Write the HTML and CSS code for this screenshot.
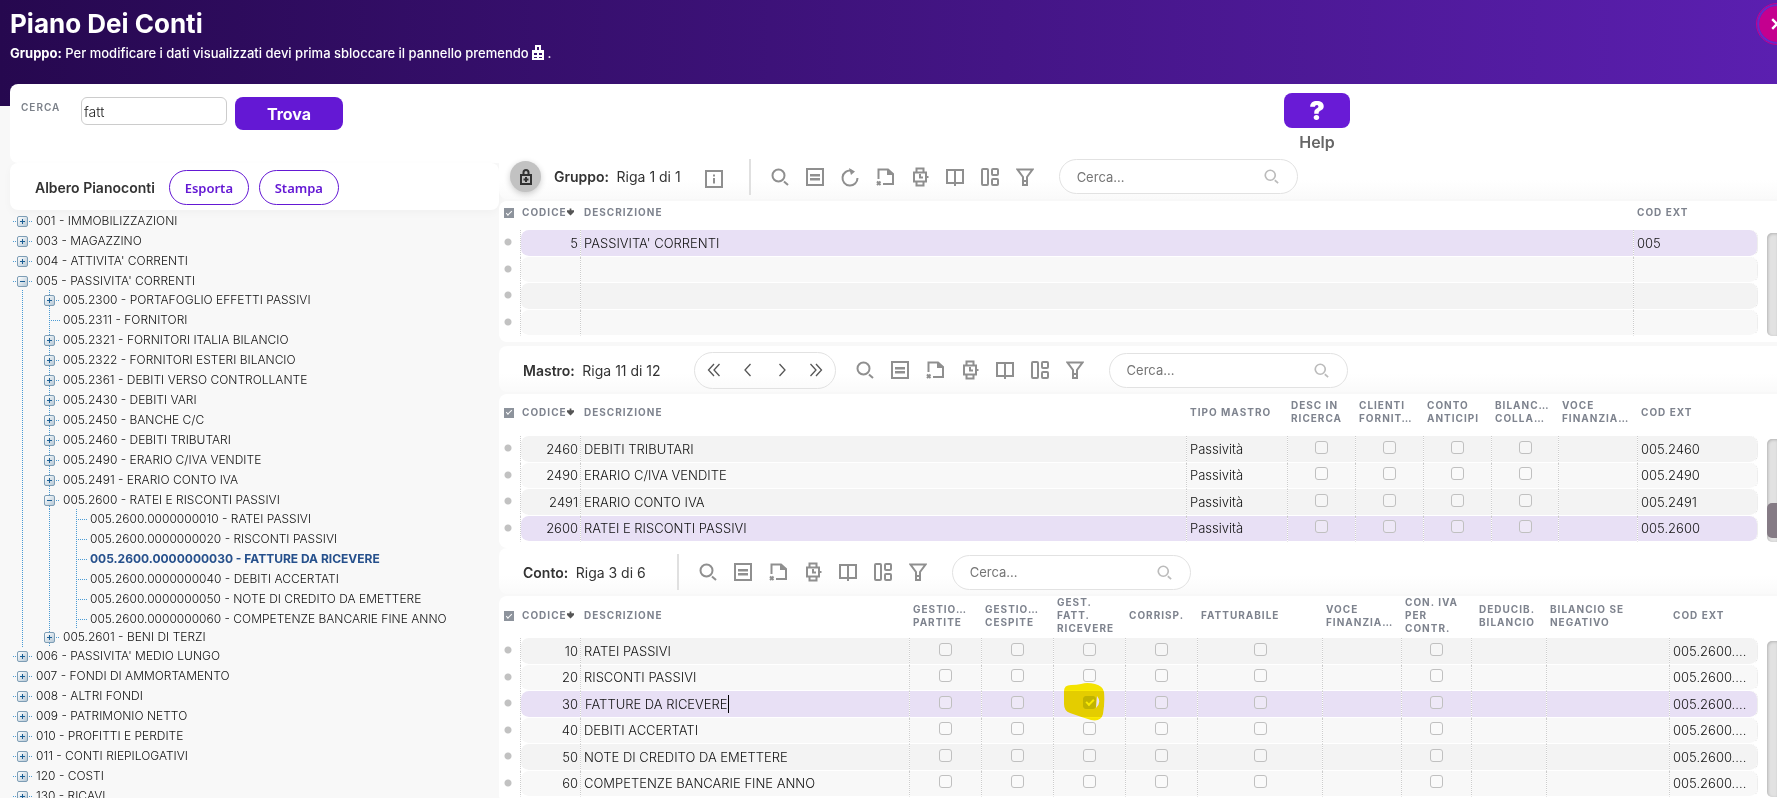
FILE: index.html
```html
<!DOCTYPE html>
<html lang="it">
<head>
<meta charset="utf-8">
<title>Piano Dei Conti</title>
<link rel="stylesheet" href="styles.css">
</head>
<body>
<svg class="sprite" aria-hidden="true">
  <symbol id="i-search" viewBox="0 0 18 18"><circle cx="7.5" cy="7.5" r="6"/><path d="M13 13.5l4 3.5"/></symbol>
  <symbol id="i-list" viewBox="0 0 18 18"><path d="M1 1h16v16H1z"/><path class="solid" d="M4 6h10v2.500H4zM4 10h10v2.500H4z"/></symbol>
  <symbol id="i-refresh" viewBox="0 0 18 18"><path d="M16.5 10a7.5 7.5 0 1 1-6-7.3"/><path class="solid" d="M8 0l6 3.5L10 7z"/></symbol>
  <symbol id="i-export" viewBox="0 0 18 18"><path d="M2.500 11V1.500H12L17 6v10H7"/><path class="solid" d="M11 1l6.500 6H11z"/><path d="M1 13.500l3.500 3.500M4.500 13.500L1 17"/></symbol>
  <symbol id="i-watch" viewBox="0 0 18 20"><path d="M5.500 5V1.500h7V5M5.500 15v3.500h7V15M3 5.500h12v9H3zM15 10h2.500M9 7v3.500h3" /></symbol>
  <symbol id="i-book" viewBox="0 0 18 18"><path d="M1 2h16v13H1zM9 2v16"/></symbol>
  <symbol id="i-grid" viewBox="0 0 18 18"><rect x="1" y="1" width="6" height="16" rx="1"/><rect x="11" y="1" width="6" height="6" rx="1"/><rect x="11" y="11" width="6" height="6" rx="1"/></symbol>
  <symbol id="i-filter" viewBox="0 0 18 18"><path d="M1.500 1.500h15L11 9v8H7V9zM7 13h4"/></symbol>
  <symbol id="i-info" viewBox="0 0 18 18"><path d="M1 1h16v16H1zM9 4.500v2M9 8v5.500"/></symbol>
  <symbol id="i-lock" viewBox="0 0 12 16"><path d="M1 6h10v9H1zM3.500 6V3.500a2.500 2.500 0 0 1 5 0V6M6 8v5M3.500 10.500h5"/></symbol>
  <symbol id="i-first" viewBox="0 0 14 14"><path d="M7 1L1.500 7 7 13M12.500 1L7 7l5.500 6"/></symbol>
  <symbol id="i-prev" viewBox="0 0 14 14"><path d="M9.500 1L4 7l5.500 6"/></symbol>
  <symbol id="i-next" viewBox="0 0 14 14"><path d="M4.500 1L10 7l-5.500 6"/></symbol>
  <symbol id="i-last" viewBox="0 0 14 14"><path d="M1.500 1L7 7l-5.500 6M7 1l5.500 6L7 13"/></symbol>
  <symbol id="i-sort" viewBox="0 0 8 8"><path class="solid" d="M3 0h2v2h3v2L4 8 0 4V2h3z"/></symbol>
</svg>

<div class="app">
  <header class="banner">
    <h1>Piano Dei Conti</h1>
    <p><strong>Gruppo:</strong> Per modificare i dati visualizzati devi prima sbloccare il pannello premendo
      <svg class="lock-inline" viewBox="0 0 12 16"><path d="M3 6V1h6v5h3v10H0V6zM5 3v3h2V3zM2 9v2h3V9zM7 9v2h3V9zM2 13v1h3v-1zM7 13v1h3v-1z"/></svg> .</p>
    <button class="close" aria-label="Chiudi"><svg viewBox="0 0 10 10"><path d="M1 1l8 8M9 1L1 9"/></svg></button>
  </header>

  <form class="finder">
    <label for="cerca">CERCA</label>
    <input id="cerca" type="text" value="fatt">
    <button type="button" class="primary">Trova</button>
    <div class="help">
      <button type="button" id="help" aria-labelledby="help-text">?</button>
      <label id="help-text" for="help">Help</label>
    </div>
  </form>

  <main>
    <aside>
      <div class="tree-bar"><h2>Albero Pianoconti</h2><button>Esporta</button><button>Stampa</button></div>
      <ul class="tree">
        <li><button class="tg plus" aria-label="Espandi"></button>001 - IMMOBILIZZAZIONI</li>
        <li><button class="tg plus" aria-label="Espandi"></button>003 - MAGAZZINO</li>
        <li><button class="tg plus" aria-label="Espandi"></button>004 - ATTIVITA' CORRENTI</li>
        <li><button class="tg" aria-label="Comprimi"></button>005 - PASSIVITA' CORRENTI</li>
        <li class="branch"><ul>
          <li><button class="tg plus" aria-label="Espandi"></button>005.2300 - PORTAFOGLIO EFFETTI PASSIVI</li>
          <li class="leaf">005.2311 - FORNITORI</li>
          <li><button class="tg plus" aria-label="Espandi"></button>005.2321 - FORNITORI ITALIA BILANCIO</li>
          <li><button class="tg plus" aria-label="Espandi"></button>005.2322 - FORNITORI ESTERI BILANCIO</li>
          <li><button class="tg plus" aria-label="Espandi"></button>005.2361 - DEBITI VERSO CONTROLLANTE</li>
          <li><button class="tg plus" aria-label="Espandi"></button>005.2430 - DEBITI VARI</li>
          <li><button class="tg plus" aria-label="Espandi"></button>005.2450 - BANCHE C/C</li>
          <li><button class="tg plus" aria-label="Espandi"></button>005.2460 - DEBITI TRIBUTARI</li>
          <li><button class="tg plus" aria-label="Espandi"></button>005.2490 - ERARIO C/IVA VENDITE</li>
          <li><button class="tg plus" aria-label="Espandi"></button>005.2491 - ERARIO CONTO IVA</li>
          <li><button class="tg" aria-label="Comprimi"></button>005.2600 - RATEI E RISCONTI PASSIVI</li>
          <li class="branch"><ul>
            <li class="leaf">005.2600.0000000010 - RATEI PASSIVI</li>
            <li class="leaf">005.2600.0000000020 - RISCONTI PASSIVI</li>
            <li class="leaf current">005.2600.0000000030 - FATTURE DA RICEVERE</li>
            <li class="leaf">005.2600.0000000040 - DEBITI ACCERTATI</li>
            <li class="leaf">005.2600.0000000050 - NOTE DI CREDITO DA EMETTERE</li>
            <li class="leaf">005.2600.0000000060 - COMPETENZE BANCARIE FINE ANNO</li>
          </ul></li>
          <li><button class="tg plus" aria-label="Espandi"></button>005.2601 - BENI DI TERZI</li>
        </ul></li>
        <li><button class="tg plus" aria-label="Espandi"></button>006 - PASSIVITA' MEDIO LUNGO</li>
        <li><button class="tg plus" aria-label="Espandi"></button>007 - FONDI DI AMMORTAMENTO</li>
        <li><button class="tg plus" aria-label="Espandi"></button>008 - ALTRI FONDI</li>
        <li><button class="tg plus" aria-label="Espandi"></button>009 - PATRIMONIO NETTO</li>
        <li><button class="tg plus" aria-label="Espandi"></button>010 - PROFITTI E PERDITE</li>
        <li><button class="tg plus" aria-label="Espandi"></button>011 - CONTI RIEPILOGATIVI</li>
        <li><button class="tg plus" aria-label="Espandi"></button>120 - COSTI</li>
        <li><button class="tg plus" aria-label="Espandi"></button>130 - RICAVI</li>
      </ul>
    </aside>

    <div class="panels">
      <section>
        <div class="bar">
          <button class="lock" aria-label="Sblocca"><svg><use href="#i-lock"/></svg></button>
          <h2>Gruppo: <span>Riga 1 di 1</span></h2>
          <button class="icon info" aria-label="Info"><svg><use href="#i-info"/></svg></button>
          <i class="sep"></i>
          <div class="tools">
            <button class="icon" aria-label="Cerca"><svg><use href="#i-search"/></svg></button>
            <button class="icon" aria-label="Dettaglio"><svg><use href="#i-list"/></svg></button>
            <button class="icon" aria-label="Aggiorna"><svg><use href="#i-refresh"/></svg></button>
            <button class="icon" aria-label="Esporta"><svg><use href="#i-export"/></svg></button>
            <button class="icon" aria-label="Storico"><svg><use href="#i-watch"/></svg></button>
            <button class="icon" aria-label="Libro"><svg><use href="#i-book"/></svg></button>
            <button class="icon" aria-label="Griglia"><svg><use href="#i-grid"/></svg></button>
            <button class="icon" aria-label="Filtro"><svg><use href="#i-filter"/></svg></button>
          </div>
          <div class="search"><input type="text" placeholder="Cerca..." aria-label="Cerca gruppo"><svg><use href="#i-search"/></svg></div>
        </div>
        <div class="sheet">
          <table class="t-gruppo">
            <colgroup><col class="w-dot"><col class="w-code"><col><col class="w-ext1"></colgroup>
            <thead><tr><th><input type="checkbox" checked aria-label="Seleziona tutto"></th><th>CODICE<svg><use href="#i-sort"/></svg></th><th>DESCRIZIONE</th><th>COD EXT</th></tr></thead>
            <tbody>
              <tr class="sel"><td></td><td>5</td><td>PASSIVITA' CORRENTI</td><td>005</td></tr>
              <tr><td></td><td></td><td></td><td></td></tr>
              <tr><td></td><td></td><td></td><td></td></tr>
              <tr><td></td><td></td><td></td><td></td></tr>
            </tbody>
          </table>
          <div class="track low"></div>
        </div>
      </section>

      <section>
        <div class="bar">
          <h2>Mastro: <span>Riga 11 di 12</span></h2>
          <div class="pager">
            <button aria-label="Prima"><svg><use href="#i-first"/></svg></button>
            <button aria-label="Precedente"><svg><use href="#i-prev"/></svg></button>
            <button aria-label="Successiva"><svg><use href="#i-next"/></svg></button>
            <button aria-label="Ultima"><svg><use href="#i-last"/></svg></button>
          </div>
          <div class="tools">
            <button class="icon" aria-label="Cerca"><svg><use href="#i-search"/></svg></button>
            <button class="icon" aria-label="Dettaglio"><svg><use href="#i-list"/></svg></button>
            <button class="icon" aria-label="Esporta"><svg><use href="#i-export"/></svg></button>
            <button class="icon" aria-label="Storico"><svg><use href="#i-watch"/></svg></button>
            <button class="icon" aria-label="Libro"><svg><use href="#i-book"/></svg></button>
            <button class="icon" aria-label="Griglia"><svg><use href="#i-grid"/></svg></button>
            <button class="icon" aria-label="Filtro"><svg><use href="#i-filter"/></svg></button>
          </div>
          <div class="search"><input type="text" placeholder="Cerca..." aria-label="Cerca mastro"><svg><use href="#i-search"/></svg></div>
        </div>
        <div class="sheet">
          <table class="tall">
            <colgroup><col class="w-dot"><col class="w-code"><col><col class="w-tipo"><col class="w-flag"><col class="w-flag"><col class="w-flag"><col class="w-bil"><col class="w-voce"><col class="w-ext2"></colgroup>
            <thead><tr><th><input type="checkbox" checked aria-label="Seleziona tutto"></th><th>CODICE<svg><use href="#i-sort"/></svg></th><th>DESCRIZIONE</th><th>TIPO MASTRO</th><th>DESC IN<br>RICERCA</th><th>CLIENTI<br>FORNIT…</th><th>CONTO<br>ANTICIPI</th><th>BILANC…<br>COLLA…</th><th>VOCE<br>FINANZIA…</th><th>COD EXT</th></tr></thead>
            <tbody>
              <tr><td></td><td>2460</td><td>DEBITI TRIBUTARI</td><td>Passività</td><td class="c"><input type="checkbox" aria-label="Desc in ricerca"></td><td class="c"><input type="checkbox" aria-label="Clienti fornitori"></td><td class="c"><input type="checkbox" aria-label="Conto anticipi"></td><td class="c"><input type="checkbox" aria-label="Bilancio"></td><td></td><td>005.2460</td></tr>
              <tr><td></td><td>2490</td><td>ERARIO C/IVA VENDITE</td><td>Passività</td><td class="c"><input type="checkbox" aria-label="Desc in ricerca"></td><td class="c"><input type="checkbox" aria-label="Clienti fornitori"></td><td class="c"><input type="checkbox" aria-label="Conto anticipi"></td><td class="c"><input type="checkbox" aria-label="Bilancio"></td><td></td><td>005.2490</td></tr>
              <tr><td></td><td>2491</td><td>ERARIO CONTO IVA</td><td>Passività</td><td class="c"><input type="checkbox" aria-label="Desc in ricerca"></td><td class="c"><input type="checkbox" aria-label="Clienti fornitori"></td><td class="c"><input type="checkbox" aria-label="Conto anticipi"></td><td class="c"><input type="checkbox" aria-label="Bilancio"></td><td></td><td>005.2491</td></tr>
              <tr class="sel"><td></td><td>2600</td><td>RATEI E RISCONTI PASSIVI</td><td>Passività</td><td class="c"><input type="checkbox" aria-label="Desc in ricerca"></td><td class="c"><input type="checkbox" aria-label="Clienti fornitori"></td><td class="c"><input type="checkbox" aria-label="Conto anticipi"></td><td class="c"><input type="checkbox" aria-label="Bilancio"></td><td></td><td>005.2600</td></tr>
            </tbody>
          </table>
          <div class="track"><div class="thumb"></div></div>
        </div>
      </section>

      <section>
        <div class="bar">
          <h2>Conto: <span>Riga 3 di 6</span></h2>
          <i class="sep wide"></i>
          <div class="tools">
            <button class="icon" aria-label="Cerca"><svg><use href="#i-search"/></svg></button>
            <button class="icon" aria-label="Dettaglio"><svg><use href="#i-list"/></svg></button>
            <button class="icon" aria-label="Esporta"><svg><use href="#i-export"/></svg></button>
            <button class="icon" aria-label="Storico"><svg><use href="#i-watch"/></svg></button>
            <button class="icon" aria-label="Libro"><svg><use href="#i-book"/></svg></button>
            <button class="icon" aria-label="Griglia"><svg><use href="#i-grid"/></svg></button>
            <button class="icon" aria-label="Filtro"><svg><use href="#i-filter"/></svg></button>
          </div>
          <div class="search"><input type="text" placeholder="Cerca..." aria-label="Cerca conto"><svg><use href="#i-search"/></svg></div>
        </div>
        <div class="sheet">
          <table class="tall t-conto">
            <colgroup><col class="w-dot"><col class="w-code"><col><col class="w-chk"><col class="w-chk"><col class="w-chk"><col class="w-chk"><col class="w-fatt"><col class="w-voce"><col class="w-iva"><col class="w-ded"><col class="w-neg"><col class="w-ext3"></colgroup>
            <thead><tr><th><input type="checkbox" checked aria-label="Seleziona tutto"></th><th>CODICE<svg><use href="#i-sort"/></svg></th><th>DESCRIZIONE</th><th>GESTIO…<br>PARTITE</th><th>GESTIO…<br>CESPITE</th><th>GEST.<br>FATT.<br>RICEVERE</th><th>CORRISP.</th><th>FATTURABILE</th><th>VOCE<br>FINANZIA…</th><th>CON. IVA<br>PER<br>CONTR.</th><th class="inset">DEDUCIB.<br>BILANCIO</th><th>BILANCIO SE<br>NEGATIVO</th><th>COD EXT</th></tr></thead>
            <tbody>
              <tr><td></td><td>10</td><td>RATEI PASSIVI</td><td class="c"><input type="checkbox" aria-label="Partite"></td><td class="c"><input type="checkbox" aria-label="Cespite"></td><td class="c"><input type="checkbox" aria-label="Fatture da ricevere"></td><td class="c"><input type="checkbox" aria-label="Corrispettivi"></td><td class="c"><input type="checkbox" aria-label="Fatturabile"></td><td></td><td class="c"><input type="checkbox" aria-label="IVA"></td><td></td><td></td><td>005.2600....</td></tr>
              <tr><td></td><td>20</td><td>RISCONTI PASSIVI</td><td class="c"><input type="checkbox" aria-label="Partite"></td><td class="c"><input type="checkbox" aria-label="Cespite"></td><td class="c"><input type="checkbox" aria-label="Fatture da ricevere"></td><td class="c"><input type="checkbox" aria-label="Corrispettivi"></td><td class="c"><input type="checkbox" aria-label="Fatturabile"></td><td></td><td class="c"><input type="checkbox" aria-label="IVA"></td><td></td><td></td><td>005.2600....</td></tr>
              <tr class="sel"><td></td><td>30</td><td><input class="edit" type="text" value="FATTURE DA RICEVERE" aria-label="Descrizione"></td><td class="c"><input type="checkbox" aria-label="Partite"></td><td class="c"><input type="checkbox" aria-label="Cespite"></td><td class="c marked"><input type="checkbox" checked aria-label="Fatture da ricevere"><svg class="marker" viewBox="0 0 42 40"><path fill-rule="evenodd" d="M1 9Q1 3 8 3Q14 3 18 2Q24 0 32 2Q40 4 41 10Q42 20 40 32Q38 40 28 38Q18 35 7 31Q1 29 1 22ZM34 14Q39 20 33 26Z"/></svg></td><td class="c"><input type="checkbox" aria-label="Corrispettivi"></td><td class="c"><input type="checkbox" aria-label="Fatturabile"></td><td></td><td class="c"><input type="checkbox" aria-label="IVA"></td><td></td><td></td><td>005.2600....</td></tr>
              <tr><td></td><td>40</td><td>DEBITI ACCERTATI</td><td class="c"><input type="checkbox" aria-label="Partite"></td><td class="c"><input type="checkbox" aria-label="Cespite"></td><td class="c"><input type="checkbox" aria-label="Fatture da ricevere"></td><td class="c"><input type="checkbox" aria-label="Corrispettivi"></td><td class="c"><input type="checkbox" aria-label="Fatturabile"></td><td></td><td class="c"><input type="checkbox" aria-label="IVA"></td><td></td><td></td><td>005.2600....</td></tr>
              <tr><td></td><td>50</td><td>NOTE DI CREDITO DA EMETTERE</td><td class="c"><input type="checkbox" aria-label="Partite"></td><td class="c"><input type="checkbox" aria-label="Cespite"></td><td class="c"><input type="checkbox" aria-label="Fatture da ricevere"></td><td class="c"><input type="checkbox" aria-label="Corrispettivi"></td><td class="c"><input type="checkbox" aria-label="Fatturabile"></td><td></td><td class="c"><input type="checkbox" aria-label="IVA"></td><td></td><td></td><td>005.2600....</td></tr>
              <tr><td></td><td>60</td><td>COMPETENZE BANCARIE FINE ANNO</td><td class="c"><input type="checkbox" aria-label="Partite"></td><td class="c"><input type="checkbox" aria-label="Cespite"></td><td class="c"><input type="checkbox" aria-label="Fatture da ricevere"></td><td class="c"><input type="checkbox" aria-label="Corrispettivi"></td><td class="c"><input type="checkbox" aria-label="Fatturabile"></td><td></td><td class="c"><input type="checkbox" aria-label="IVA"></td><td></td><td></td><td>005.2600....</td></tr>
            </tbody>
          </table>
          <div class="track"></div>
        </div>
      </section>
    </div>
  </main>
</div>
</body>
</html>
```

FILE: styles.css
```css
* { box-sizing: border-box; }
body {
  margin: 0;
  font-family: Inter, "Liberation Sans", sans-serif;
  font-size: 14px;
  color: #111;
}
h1, h2, p, ul { margin: 0; padding: 0; }
ul { list-style: none; }
button { font-family: inherit; cursor: pointer; padding: 0; border: 0; background: none; }
input { font-family: inherit; }
.sprite { position: absolute; width: 0; height: 0; }
svg { fill: none; stroke: currentColor; stroke-width: 2; display: block; flex: none; }
.solid { fill: currentColor; stroke: none; }

.app {
  height: 100vh;
  overflow: hidden;
  padding-left: 10px;
  background: linear-gradient(90deg, #26084f, #5b1fb0) 0 0 / 100% 106px no-repeat, #f8f8f8;
}

/* Banner */
.banner { position: relative; height: 84px; padding-top: 8px; color: #fff; }
.banner h1 { font-size: 26px; line-height: 32px; font-weight: 700; }
.banner p { margin-top: 3px; font-size: 13px; line-height: 20px; font-weight: 500; }
.banner strong { font-weight: 700; }
.lock-inline { display: inline-block; width: 12px; height: 16px; fill: #fff; fill-rule: evenodd; stroke: none; vertical-align: -2px; }
.close {
  position: absolute; top: 3px; right: -21px; width: 42px; height: 42px;
  border: 1px solid #c4008f; border-radius: 50%; padding: 2px;
  background: #c4008f content-box; color: #fff;
  box-shadow: inset 0 0 0 2px #6b27c9;
  display: flex; align-items: center; justify-content: center;
}
.close svg { width: 12px; height: 12px; }

/* Search form */
.finder { display: flex; align-items: flex-start; height: 79px; padding: 9px 0 0 11px; background: #fff; border-radius: 8px 0 0 8px; }
.finder > label { width: 60px; padding-top: 8px; font-size: 10px; line-height: 13px; font-weight: 600; letter-spacing: 1px; color: #7b8089; }
.finder input { width: 146px; height: 28px; margin-top: 4px; padding: 0 2px; border: 1px solid #ccc; border-radius: 6px; font-size: 14px; color: #222; font-weight: 300; }
.primary { width: 108px; height: 33px; margin: 4px 0 0 8px; border-radius: 8px; background: #6418d4; color: #fff; font-size: 16px; font-weight: 700; }
.help { margin: 0 427px 0 auto; display: flex; flex-direction: column; align-items: center; }
.help button { width: 66px; height: 35px; border-radius: 8px; background: #691bd6; color: #fff; font-size: 26px; font-weight: 900; }
.help label { margin-top: 3px; font-size: 16px; line-height: 22px; font-weight: 600; color: #666; }

main { display: grid; grid-template-columns: 489px 1fr; }

/* Tree */
.tree-bar { display: flex; align-items: center; gap: 10px; height: 47px; padding: 2px 0 0 25px; background: #fff; border-radius: 8px; box-shadow: 0 3px 8px #00000008; }
.tree-bar h2 { font-size: 14px; font-weight: 600; margin-right: 4px; color: #333; }
.tree-bar button { width: 80px; height: 35px; border: 1px solid #6418d4; border-radius: 18px; color: #6418d4; font-family: "Noto Sans", sans-serif; font-size: 13px; font-weight: 600; }
.tree { font-size: 12px; font-weight: 300; line-height: 20px; padding: 1px 0 0 3px; white-space: nowrap; }
.tree li { display: flex; align-items: center; height: 20px; }
.tree .branch { display: block; height: auto; margin: -1px 0; padding-left: 9px; }
.tree .branch > ul { padding-left: 18px; background: repeating-linear-gradient(#4a9bd4 0 1px, transparent 1px 2px) 0 0 / 1px 100% no-repeat; }
.tree .branch .branch { margin-bottom: -2px; }
.tg { position: relative; width: 11px; height: 11px; margin: 1px 8px 0 4px; flex: none; border: 1px solid #7d9db5; border-radius: 2px; background: linear-gradient(135deg, #fff, #b5c8d6); }
.tg::before { content: ""; position: absolute; left: 2px; right: 2px; top: 4px; height: 1px; background: #1b5e94; }
.plus::after { content: ""; position: absolute; top: 2px; bottom: 2px; left: 4px; width: 1px; background: #1b5e94; }
.tree li:has(> .tg) { background: repeating-linear-gradient(90deg, #4a9bd4 0 1px, transparent 1px 2px) 0 10px / 20px 1px no-repeat; }
.branch li:has(> .tg) { background: repeating-linear-gradient(90deg, #4a9bd4 0 1px, transparent 1px 2px) 10px 10px / 10px 1px no-repeat, repeating-linear-gradient(#4a9bd4 0 1px, transparent 1px 2px) 9px 0 / 1px 20px no-repeat; }
.tree .leaf { padding-left: 23px; background: repeating-linear-gradient(90deg, #4a9bd4 0 1px, transparent 1px 2px) 9px 10px / 11px 1px no-repeat, repeating-linear-gradient(#4a9bd4 0 1px, transparent 1px 2px) 9px 0 / 1px 20px no-repeat; }
.current { font-weight: 700; color: #26508c; }

/* Panels */
.panels { margin-top: -11px; min-width: 0; }
.panels section + section { margin-top: 4px; }
.panels section:last-child { margin-top: 0; }
.bar { display: flex; align-items: center; height: 46px; padding: 2px 0 0 24px; margin-bottom: 2px; border-radius: 8px 0 0 8px; background: linear-gradient(#fff 60%, #fafafa); }
.bar:has(.lock) { height: 47px; padding-left: 11px; }
.bar h2 { font-size: 14px; font-weight: 600; color: #333; white-space: pre; }
.bar h2 span { font-weight: 400; margin-left: 4px; }
.lock { width: 31px; height: 31px; margin-right: 13px; border-radius: 50%; background: #c2c2c2; color: #333; box-shadow: 0 2px 6px #0003; display: flex; align-items: center; justify-content: center; }
.lock svg { width: 12px; height: 16px; }
.icon { width: 18px; height: 20px; color: #8f8f8f; display: flex; align-items: center; }
.icon svg { width: 18px; height: 20px; }
.info { margin: 5px 0 0 24px; }
.sep { width: 2px; height: 36px; margin-left: 26px; background: #e0e0e0; }
.sep.wide { margin-left: 31px; }
.tools { display: flex; gap: 17px; margin: 0 25px 0 20px; }
.search { display: flex; align-items: center; width: 239px; height: 35px; padding: 0 18px 0 17px; border: 1px solid #e2e2e2; border-radius: 18px; background: #fff; }
.search input { flex: 1; min-width: 0; border: 0; padding: 0; background: none; font-size: 13px; outline: 0; }
.search input::placeholder { color: #757575; }
.search svg { width: 15px; height: 15px; color: #bbb; }
.pager { display: flex; align-items: center; justify-content: space-between; width: 142px; height: 37px; margin-left: 33px; padding: 0 11px; border: 1px solid #e2e2e2; border-radius: 19px; }
.pager button { width: 16px; height: 16px; color: #555; }
.pager svg { width: 14px; height: 14px; margin: auto; stroke-width: 1.3; }

/* Data tables */
.sheet { display: flex; background: #fff; border-radius: 8px 0 0 8px; padding-bottom: 6px; }
table { flex: 1; min-width: 0; table-layout: fixed; border-collapse: separate; border-spacing: 0; }
.w-dot { width: 22px; } .w-code { width: 59px; }
.w-ext1 { width: 125px; } .w-tipo { width: 101px; } .w-flag { width: 68px; } .w-bil { width: 67px; }
.w-voce { width: 79px; } .w-ext2 { width: 121px; } .w-chk { width: 72px; } .w-fatt { width: 125px; }
.w-iva { width: 70px; } .w-ded { width: 75px; } .w-neg { width: 123px; } .w-ext3 { width: 89px; }
th { height: 29px; padding: 0 0 6px 4px; text-align: left; vertical-align: middle; font-size: 10px; line-height: 13px; font-weight: 700; letter-spacing: 1px; color: #7e838e; white-space: nowrap; }
.tall th { height: 42px; }
.t-conto th { padding-bottom: 3px; }
th:nth-child(1) { padding-left: 5px; }
th:nth-child(2) { padding-left: 1px; }
.t-conto .inset { padding-left: 8px; }
th svg { display: inline-block; width: 7px; height: 8px; color: #555; }
tbody tr { height: 26px; }
tbody tr:nth-child(odd) { height: 27px; }
td { padding: 0 0 0 3px; border: 0 solid #fff; border-bottom: 1px solid #fff; border-left: 1px dotted #ccc; background: #f8f8f8; background-clip: padding-box; font-size: 13px; line-height: 17px; font-weight: 300; white-space: nowrap; }
tr:nth-child(odd) td { background-color: #f3f3f3; }
tr.sel td { background-color: #e8e0f5; }
td:nth-child(1), tr:nth-child(odd) td:nth-child(1), tr.sel td:nth-child(1) { border-left: 0; border-right: 1px dotted #ccc; background: radial-gradient(circle at 9px 12px, #c2c2c2 3px, transparent 4px) #fff; }
td:nth-child(2) { border-left: 0; border-radius: 8px 0 0 8px; text-align: right; padding-right: 2px; }
td:last-child { border-right: 1px dotted #ddd; border-radius: 0 8px 8px 0; }
td.c { padding: 0 0 4px; text-align: center; line-height: 0; }
input[type="checkbox"] { appearance: none; width: 13px; height: 13px; margin: 0; border: 1px solid #c0c0c0; border-radius: 3px; background: #fff4; vertical-align: middle; }
input[type="checkbox"]:checked { border-color: #c4c4c4; background: #c4c4c4; display: inline-grid; place-items: center; }
input[type="checkbox"]:checked::before { content: ""; width: 6px; height: 3px; margin-bottom: 2px; border: solid #fff; border-width: 0 0 2px 2px; rotate: -45deg; }
th input[type="checkbox"]:checked { width: 10px; height: 10px; border-radius: 0; border-color: #8d939c; background: #8d939c; }
th input[type="checkbox"]:checked::before { width: 5px; height: 2px; border-width: 0 0 1px 1px; }
.edit { field-sizing: content; height: 18px; margin-left: 1px; padding: 0; border: 0; border-right: 1px solid #000; background: none; font-size: 13px; font-weight: 300; color: #111; outline: 0; }
.marked { position: relative; }
.marker { position: absolute; left: 9px; top: -9px; width: 42px; height: 40px; fill: #fbea00; stroke: none; mix-blend-mode: multiply; z-index: 1; }
.track { flex: none; width: 10px; margin: 45px 0 0 9px; border-radius: 5px 0 0 5px; background: #e2e2e2; box-shadow: inset 1px 1px 3px #0003; display: flex; flex-direction: column; justify-content: flex-end; padding-bottom: 4px; }
.track.low { margin-top: 32px; }
.thumb { height: 35px; border-radius: 5px 0 0 5px; background: #857b85; }
```
